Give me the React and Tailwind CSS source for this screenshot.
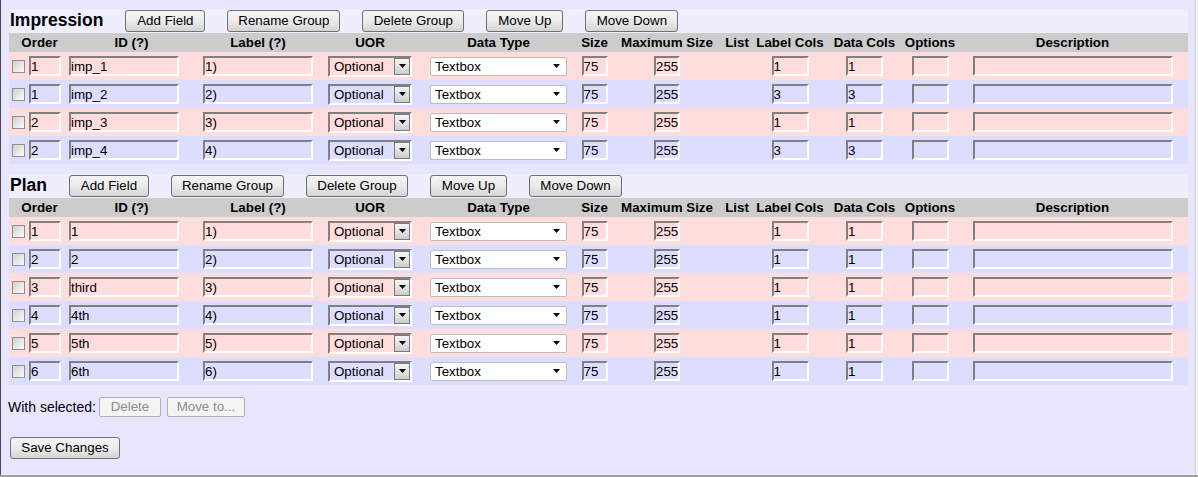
import React from "react";
import clsx from "clsx";

const FONT = "font-['Liberation_Sans',Arial,sans-serif]";

function Btn({ children, className }) {
  return (
    <button
      type="button"
      className={clsx(
        "h-[22px] shrink-0 rounded-[3px] border border-[#707070] bg-linear-to-b from-[#f4f4f4] via-[#ebebeb] to-[#d4d4d4] text-[13.33px] leading-none text-black",
        className
      )}
    >
      {children}
    </button>
  );
}

function DisBtn({ children, className }) {
  return (
    <button
      type="button"
      className={clsx(
        "h-[20px] shrink-0 rounded-[2px] border border-[#b0b0b0] bg-[#f4f4f4] text-[13.33px] leading-none text-[#8d8d8d]",
        className
      )}
    >
      {children}
    </button>
  );
}

function Field({ value, className }) {
  return (
    <input
      readOnly
      defaultValue={value}
      className={clsx(
        "h-[20px] border-2 border-t-[#808080] border-l-[#808080] border-r-white border-b-white bg-transparent px-0 text-[13.33px] text-black outline-none",
        className
      )}
    />
  );
}

function Tri() {
  return (
    <svg width="7" height="4" viewBox="0 0 7 4">
      <path d="M0 0H7L3.5 4Z" fill="#000" />
    </svg>
  );
}

function UorSelect() {
  return (
    <div className="flex h-[21px] w-[84px] items-stretch border-2 border-t-[#808080] border-l-[#808080] border-r-white border-b-white">
      <span className="flex-1 pl-[4px] text-left text-[13.33px] leading-[17px] text-black">
        Optional
      </span>
      <span className="flex w-[16px] items-center justify-center border border-[#7a7a7a] bg-linear-to-b from-[#f6f6f6] to-[#cdcdcd]">
        <Tri />
      </span>
    </div>
  );
}

function TypeSelect() {
  return (
    <div className="flex h-[19px] w-[137px] items-center rounded-[2px] border border-[#bdbdbd] bg-white">
      <span className="flex-1 pl-[4px] text-left text-[13.33px] leading-[17px] text-black">
        Textbox
      </span>
      <span className="mr-[6px] flex items-center">
        <Tri />
      </span>
    </div>
  );
}

function Checkbox() {
  return (
    <div className="h-[13px] w-[13px] shrink-0 border border-[#8f8f8f] bg-linear-to-br from-[#d0d0d0] to-[#fbfbfb]" />
  );
}

const HEADERS = [
  "Order",
  "ID (?)",
  "Label (?)",
  "UOR",
  "Data Type",
  "Size",
  "Maximum Size",
  "List",
  "Label Cols",
  "Data Cols",
  "Options",
  "Description",
];

function Row({ r, i }) {
  const cell = "flex h-[28px] items-center justify-center";
  return (
    <tr className={i % 2 === 0 ? "bg-[#ffdddd]" : "bg-[#ddddff]"}>
      <td className="p-0">
        <div className="flex h-[28px] items-center gap-[4px] pl-[3px]">
          <Checkbox />
          <Field value={r.order} className="w-[32px]" />
        </div>
      </td>
      <td className="p-0">
        <div className="flex h-[28px] items-center pl-[4px]">
          <Field value={r.id} className="w-[110px]" />
        </div>
      </td>
      <td className="p-0">
        <div className={cell}>
          <Field value={r.label} className="w-[110px]" />
        </div>
      </td>
      <td className="p-0">
        <div className={cell}>
          <UorSelect />
        </div>
      </td>
      <td className="p-0">
        <div className={cell}>
          <TypeSelect />
        </div>
      </td>
      <td className="p-0">
        <div className={cell}>
          <Field value="75" className="w-[26px]" />
        </div>
      </td>
      <td className="p-0">
        <div className={cell}>
          <Field value="255" className="w-[26px]" />
        </div>
      </td>
      <td className="p-0" />
      <td className="p-0">
        <div className={cell}>
          <Field value={r.lc} className="w-[37px]" />
        </div>
      </td>
      <td className="p-0">
        <div className={cell}>
          <Field value={r.dc} className="w-[37px]" />
        </div>
      </td>
      <td className="p-0">
        <div className={cell}>
          <Field value="" className="w-[37px]" />
        </div>
      </td>
      <td className="p-0">
        <div className={cell}>
          <Field value="" className="w-[200px]" />
        </div>
      </td>
    </tr>
  );
}

function Group({ title, rows, className }) {
  return (
    <div className={clsx("w-[1179px]", className)}>
      <div className="flex h-[24px] items-center gap-[22px] bg-[#eeeeff] pl-[1px]">
        <span className="text-[17.5px] font-bold leading-none text-black">{title}</span>
        <Btn className="w-[80px]">Add Field</Btn>
        <Btn className="w-[113px]">Rename Group</Btn>
        <Btn className="w-[102px]">Delete Group</Btn>
        <Btn className="w-[77px]">Move Up</Btn>
        <Btn className="w-[93px]">Move Down</Btn>
      </div>
      <table className="w-[1179px] table-fixed border-collapse">
        <colgroup>
          <col className="w-[56px]" />
          <col className="w-[133px]" />
          <col className="w-[120px]" />
          <col className="w-[104px]" />
          <col className="w-[153px]" />
          <col className="w-[39px]" />
          <col className="w-[106px]" />
          <col className="w-[34px]" />
          <col className="w-[72px]" />
          <col className="w-[77px]" />
          <col className="w-[54px]" />
          <col className="w-[231px]" />
        </colgroup>
        <thead>
          <tr className="h-[19px] bg-[#cccccc]">
            {HEADERS.map((h, idx) => (
              <th
                key={h}
                className={clsx(
                  "whitespace-nowrap p-0 text-center text-[13.33px] font-bold leading-[19px] text-black",
                  idx === 0 && "pl-[5px]"
                )}
              >
                {h}
              </th>
            ))}
          </tr>
        </thead>
        <tbody>
          {rows.map((r, i) => (
            <Row key={i} r={r} i={i} />
          ))}
        </tbody>
      </table>
    </div>
  );
}

const IMPRESSION = [
  { order: "1", id: "imp_1", label: "1)", lc: "1", dc: "1" },
  { order: "1", id: "imp_2", label: "2)", lc: "3", dc: "3" },
  { order: "2", id: "imp_3", label: "3)", lc: "1", dc: "1" },
  { order: "2", id: "imp_4", label: "4)", lc: "3", dc: "3" },
];

const PLAN = [
  { order: "1", id: "1", label: "1)", lc: "1", dc: "1" },
  { order: "2", id: "2", label: "2)", lc: "1", dc: "1" },
  { order: "3", id: "third", label: "3)", lc: "1", dc: "1" },
  { order: "4", id: "4th", label: "4)", lc: "1", dc: "1" },
  { order: "5", id: "5th", label: "5)", lc: "1", dc: "1" },
  { order: "6", id: "6th", label: "6)", lc: "1", dc: "1" },
];

export default function App() {
  return (
    <div className={clsx("flex h-[477px] w-[1198px] overflow-hidden border-b-2 border-b-[#a0a0a0] bg-[#e8e6ff]", FONT)}>
      <div className="w-[1px] shrink-0 bg-[#4a4a4a]" />
      <div className="flex w-[1194px] flex-col pl-[8px] pt-[9px]">
        <Group title="Impression" rows={IMPRESSION} />
        <Group title="Plan" rows={PLAN} className="mt-[10px]" />
        <div className="ml-[-1px] mt-[12px] flex h-[20px] items-center">
          <span className="text-[14px] text-black">With selected:</span>
          <DisBtn className="ml-[3px] w-[62px]">Delete</DisBtn>
          <DisBtn className="ml-[6px] w-[78px]">Move to...</DisBtn>
        </div>
        <div className="ml-[1px] mt-[18px]">
          <Btn className="w-[110px]">Save Changes</Btn>
        </div>
      </div>
      <div className="w-[1px] shrink-0 bg-[#d4d0c8]" />
      <div className="w-[2px] shrink-0 bg-[#f4f4f4]" />
    </div>
  );
}
